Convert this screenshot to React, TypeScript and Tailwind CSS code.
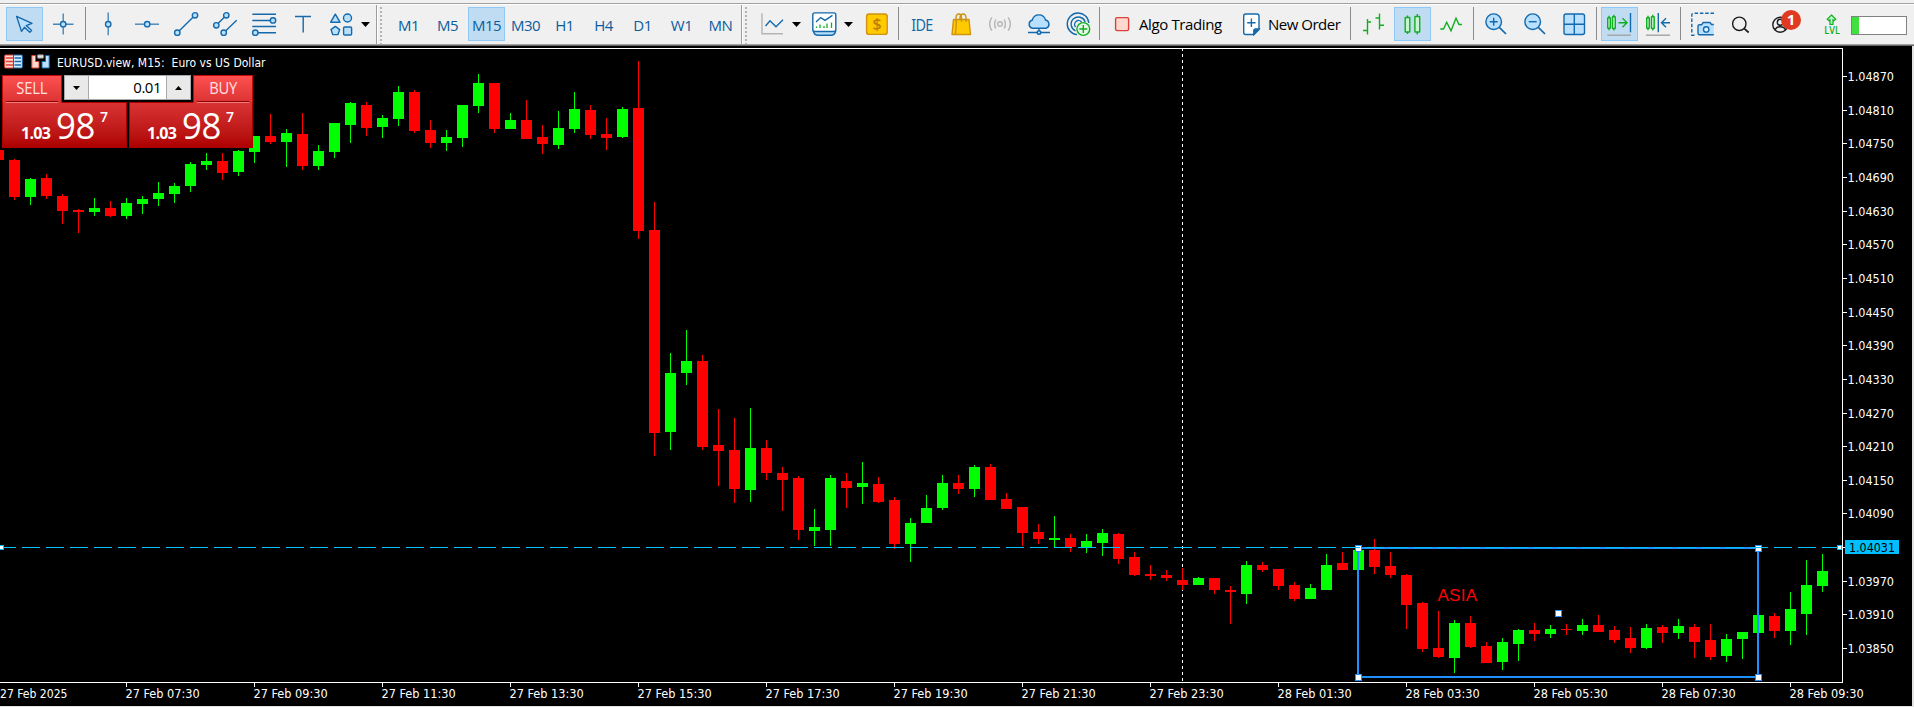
import type { ReactNode } from "react";

/* [wickTop, wickBottom, bodyTop, bodyBottom, rising] */
type Candle = [number, number, number, number, 0 | 1];

const FIRST_X = -2;
const STEP = 16;

const CANDLES: Candle[] = [
  [150, 160, 150, 160, 0],
  [159, 200, 160, 197, 0],
  [178, 205, 179, 197, 1],
  [174, 199, 178, 196, 0],
  [194, 224, 196, 211, 0],
  [209, 233, 210, 212, 0],
  [198, 216, 208, 212, 1],
  [201, 217, 208, 216, 0],
  [198, 219, 203, 216, 1],
  [196, 214, 199, 204, 1],
  [182, 206, 193, 199, 1],
  [183, 203, 186, 194, 1],
  [162, 192, 164, 186, 1],
  [153, 170, 161, 165, 1],
  [153, 180, 161, 173, 0],
  [150, 176, 151, 172, 1],
  [136, 163, 136, 152, 1],
  [114, 144, 136, 142, 0],
  [129, 167, 133, 142, 1],
  [113, 170, 134, 166, 0],
  [145, 170, 151, 166, 1],
  [123, 158, 123, 152, 1],
  [102, 143, 103, 125, 1],
  [102, 136, 105, 128, 0],
  [115, 138, 118, 127, 1],
  [86, 126, 92, 119, 1],
  [90, 133, 92, 131, 0],
  [120, 148, 130, 143, 0],
  [130, 151, 137, 143, 1],
  [105, 147, 105, 138, 1],
  [74, 113, 83, 106, 1],
  [83, 133, 83, 129, 0],
  [113, 129, 120, 129, 1],
  [100, 139, 120, 139, 0],
  [125, 154, 137, 144, 0],
  [111, 149, 128, 145, 1],
  [92, 133, 109, 129, 1],
  [105, 139, 110, 135, 0],
  [118, 150, 134, 138, 0],
  [107, 138, 109, 137, 1],
  [61, 239, 108, 231, 0],
  [202, 456, 230, 433, 0],
  [353, 450, 373, 432, 1],
  [330, 385, 361, 373, 1],
  [355, 450, 361, 447, 0],
  [409, 486, 445, 451, 0],
  [418, 503, 450, 489, 0],
  [408, 502, 448, 490, 1],
  [440, 480, 448, 473, 0],
  [467, 511, 473, 480, 0],
  [476, 540, 478, 530, 0],
  [509, 546, 527, 531, 1],
  [475, 546, 478, 530, 1],
  [473, 508, 481, 488, 0],
  [462, 504, 483, 487, 1],
  [477, 503, 484, 502, 0],
  [497, 549, 500, 544, 0],
  [518, 562, 523, 544, 1],
  [495, 523, 508, 523, 1],
  [475, 510, 483, 508, 1],
  [475, 494, 483, 489, 0],
  [465, 497, 467, 489, 1],
  [464, 500, 467, 500, 0],
  [493, 509, 499, 509, 0],
  [507, 546, 507, 533, 0],
  [524, 544, 532, 539, 0],
  [516, 547, 538, 540, 1],
  [534, 552, 538, 547, 0],
  [534, 553, 541, 547, 1],
  [529, 556, 533, 543, 1],
  [533, 564, 534, 559, 0],
  [552, 576, 557, 575, 0],
  [565, 580, 574, 576, 0],
  [570, 581, 575, 578, 0],
  [568, 590, 580, 585, 0],
  [577, 585, 578, 585, 1],
  [578, 594, 578, 590, 0],
  [586, 624, 590, 592, 0],
  [561, 604, 565, 594, 1],
  [562, 572, 565, 570, 0],
  [569, 590, 569, 586, 0],
  [582, 601, 585, 599, 0],
  [584, 599, 588, 599, 1],
  [554, 590, 565, 590, 1],
  [552, 570, 563, 570, 0],
  [550, 570, 550, 570, 1],
  [539, 574, 550, 567, 0],
  [552, 578, 566, 575, 0],
  [574, 629, 575, 605, 0],
  [602, 652, 603, 649, 0],
  [611, 658, 648, 657, 0],
  [620, 673, 623, 658, 1],
  [616, 648, 623, 647, 0],
  [642, 663, 646, 663, 0],
  [638, 670, 642, 662, 1],
  [629, 661, 630, 644, 1],
  [623, 641, 630, 634, 0],
  [625, 638, 629, 634, 1],
  [624, 635, 629, 630, 0],
  [619, 635, 625, 631, 1],
  [615, 632, 625, 632, 0],
  [626, 643, 630, 640, 0],
  [627, 653, 638, 648, 0],
  [624, 649, 628, 648, 1],
  [625, 643, 627, 633, 0],
  [619, 639, 626, 633, 1],
  [624, 658, 627, 642, 0],
  [624, 660, 640, 657, 0],
  [634, 662, 639, 656, 1],
  [632, 659, 632, 639, 1],
  [615, 633, 615, 633, 1],
  [613, 638, 616, 631, 0],
  [592, 645, 609, 631, 1],
  [560, 635, 585, 614, 1],
  [554, 592, 571, 586, 1],
];

const PRICES = [
  "1.04870", "1.04810", "1.04750", "1.04690", "1.04630", "1.04570", "1.04510", "1.04450", "1.04390",
  "1.04330", "1.04270", "1.04210", "1.04150", "1.04090", "", "1.03970", "1.03910", "1.03850",
];

const TIMES = [
  "27 Feb 2025", "27 Feb 07:30", "27 Feb 09:30", "27 Feb 11:30", "27 Feb 13:30", "27 Feb 15:30", "27 Feb 17:30",
  "27 Feb 19:30", "27 Feb 21:30", "27 Feb 23:30", "28 Feb 01:30", "28 Feb 03:30", "28 Feb 05:30", "28 Feb 07:30",
  "28 Feb 09:30",
];

const TAHOMA = "font-['DejaVu_Sans_Condensed','DejaVu_Sans',sans-serif]";
const SEGOE = "font-['Open_Sans',sans-serif]";

const BLUE = "#1469ac";
const SKY = "#b9e1ff";
const GREEN = "#0fae22";

function Icon({ children, active = false, wide = "w-[39px]", vb = 39 }: { children: ReactNode; active?: boolean; wide?: string; vb?: number }) {
  return (
    <div className={`${active ? "w-[37px] bg-[#c0dcf3] outline outline-1 -outline-offset-1 outline-[#90c8f6]" : wide} h-[34px] shrink-0`}>
      <svg className="block h-full w-full overflow-visible" viewBox={`0 0 ${active ? 37 : vb} 34`} fill="none" stroke={BLUE} strokeWidth="1.4">
        {children}
      </svg>
    </div>
  );
}

function Caret() {
  return (
    <svg className="h-[34px] w-[13px] shrink-0" viewBox="0 0 13 34">
      <path d="M0 15H9L4.5 20Z" fill="#000" />
    </svg>
  );
}

function Separator() {
  return (
    <div className="h-[33px] w-[6px] shrink-0 pl-[2px]">
      <div className="h-full w-px bg-[#8c8c8c]" />
    </div>
  );
}

function Grip() {
  return (
    <div className="flex w-[12px] shrink-0 gap-[3px] self-stretch">
      <div className="w-px bg-[#9c9c9c] shadow-[1px_0_0_#fff]" />
      <div className="mt-[2px] w-[2px] bg-[repeating-linear-gradient(to_bottom,#b4b4b4_0,#b4b4b4_2px,transparent_2px,transparent_4px)]" />
    </div>
  );
}

function Period({ label, active = false }: { label: string; active?: boolean }) {
  return (
    <div
      className={`${active ? "mx-px w-[37px] bg-[#c0dcf3] outline outline-1 -outline-offset-1 outline-[#90c8f6]" : "w-[39px]"} flex h-[34px] shrink-0 items-center justify-center pt-[2px] text-[15px] tracking-[-0.5px] text-[#0b5c9e]`}
    >
      {label}
    </div>
  );
}

function Node({ x, y }: { x: number; y: number }) {
  return <circle cx={x} cy={y} r="2.7" fill={SKY} />;
}

function MiniCandle({ x, y, w, h, o = 2 }: { x: number; y: number; w: number; h: number; o?: number }) {
  return (
    <g stroke={GREEN} fill="#c8f5cf" strokeWidth="1.4">
      <path d={`M${x + w / 2} ${y - o}V${y + h + o}`} />
      <rect x={x} y={y} width={w} height={h} rx="0.5" />
    </g>
  );
}

function Toolbar() {
  return (
    <div className={`flex h-[46px] shrink-0 flex-col bg-[#f0f0f0] ${SEGOE}`}>
      <div className="mt-[3px] h-px shrink-0 bg-[#a0a0a0]" />
      <div className="h-px shrink-0 bg-white" />
      <div className="flex h-[39px] shrink-0 items-start overflow-hidden">
        <div className="mt-[2px] flex pl-[6px]">
          <Icon active>
            <path d="M10.6 9.4 26 16.3 20.2 18.6 25.6 23.6 23.8 25.3 18.4 20.3 15.5 24.4Z" fill={SKY} strokeLinejoin="round" />
          </Icon>
          <div className="w-px" />
          <Icon>
            <path d="M9 17.2H29.5M19.2 6.5V27.5" stroke="#4585b8" />
            <Node x={19.2} y={17.2} />
          </Icon>
          <Separator />
          <Icon>
            <path d="M19.2 5.5V28.3" stroke="#4585b8" />
            <Node x={19.2} y={17.2} />
          </Icon>
          <Icon>
            <path d="M7 17.2H31" stroke="#4585b8" />
            <Node x={19.2} y={17.2} />
          </Icon>
          <Icon>
            <path d="M10.3 25.7 28 8.3" />
            <Node x={10.3} y={25.7} />
            <Node x={28} y={8.3} />
          </Icon>
          <Icon>
            <path d="M10.3 18.3 20.3 8.3M17.7 25.7 30.7 13.3" />
            <Node x={10.3} y={18.3} />
            <Node x={20.3} y={8.3} />
            <Node x={17.7} y={25.7} />
          </Icon>
          <Icon>
            <path d="M7.3 7.3H31M7.3 13.5H28M7.3 19.5H31M10.3 25.7H31" />
            <Node x={28} y={13.4} />
            <Node x={10.3} y={25.7} />
          </Icon>
          <Icon>
            <path d="M11 9.5H27M19.2 9.5V25.5" />
          </Icon>
          <Icon>
            <g fill={SKY} strokeLinejoin="round">
              <path d="M12.3 7.2 17 15.2H7.7Z" />
              <circle cx="24.5" cy="11" r="4" />
              <path d="M12.3 19.4 16.7 22.6 15 27.6H9.7L8 22.6Z" />
              <rect x="20.6" y="20" width="8" height="8" rx="1" />
            </g>
          </Icon>
          <div className="-ml-px">
            <Caret />
          </div>
          <div className="w-[2px]" />
        </div>
        <Grip />
        <div className="mt-[2px] flex pl-px">
          <Period label="M1" />
          <Period label="M5" />
          <Period label="M15" active />
          <Period label="M30" />
          <Period label="H1" />
          <Period label="H4" />
          <Period label="D1" />
          <Period label="W1" />
          <Period label="MN" />
          <div className="w-px" />
        </div>
        <Grip />
        <div className="mt-[2px] flex">
          <Icon>
            <path d="M9 6.3V26.8H30" stroke="#b4b4b4" />
            <path d="M12.5 19 17 13.7 23 19.7 30 12.8" />
          </Icon>
          <Caret />
          <Icon>
            <path d="M8.5 24.5Q9.5 28.3 13 28.3H26Q29.5 28.3 30.5 24.5Z" fill={SKY} />
            <rect x="7.8" y="5.9" width="23" height="18.5" rx="2" fill="#fff" />
            <path d="M11 15 15.7 10.6 20 13.4 27.5 8.4" />
            <path d="M11.5 21V19.5M15 21V17.5M19 21V19M22 21V16.5M26.5 21V15.5" stroke={GREEN} strokeWidth="1.3" />
          </Icon>
          <Caret />
          <Icon>
            <rect x="9.6" y="7" width="20.6" height="20.4" rx="2.5" fill="#ffcb00" stroke="#cf9310" />
            <text x="20" y="23" fontSize="16" stroke="none" fill="#bb7f0a" textAnchor="middle" className="font-['Open_Sans',sans-serif] font-semibold">$</text>
          </Icon>
          <Separator />
          <div className="flex h-[34px] w-[39px] items-center justify-center pt-[1px] text-[16px] text-[#1469ac]">
            <span className="-mx-4 scale-x-90 font-['Noto_Sans',sans-serif] tracking-[-0.7px]">IDE</span>
          </div>
          <Icon>
            <path d="M12.5 12.5H28L29.5 27.5H11Z" fill="#ffcb00" stroke="#cf9310" strokeLinejoin="round" />
            <path d="M15 15V11Q15 7 17.8 7T20.5 11V15M19 12V10Q19.5 7 22.2 7T25 11V15M15.5 12.5 14.5 27" stroke="#cf9310" />
          </Icon>
          <Icon>
            <g stroke="#b8b8b8" strokeWidth="1.5">
              <circle cx="20" cy="17" r="2.3" />
              <path d="M15.8 12.5Q13.5 17 15.8 21.5M24.2 12.5Q26.5 17 24.2 21.5M11.8 10.3Q7.5 17 11.8 23.7M28.2 10.3Q32.5 17 28.2 23.7" />
            </g>
          </Icon>
          <Icon>
            <path d="M13 21.2A4.3 4.3 0 0 1 13.3 13 6.8 6.8 0 0 1 26.5 13 4.3 4.3 0 0 1 27.3 21.2Z" fill={SKY} />
            <path d="M20 21.5V25M9 25.5H31" />
            <circle cx="20" cy="25.5" r="1.8" fill={SKY} />
          </Icon>
          <Icon>
            <path d="M19 27.6A10.8 10.8 0 1 1 30.8 16M17.5 23.8A7.2 7.2 0 1 1 27.2 15M17.5 20A3.8 3.8 0 1 1 23.6 15" />
            <circle cx="25.3" cy="22" r="6.4" fill="#e3f9e6" stroke={GREEN} />
            <path d="M25.3 18V26M21.3 22H29.3" stroke={GREEN} />
          </Icon>
          <Separator />
          <Icon wide="w-[32px]" vb={32}>
            <rect x="12.6" y="10.6" width="13" height="13" rx="1.5" fill="#ffd8ce" stroke="#dd4038" />
          </Icon>
          <div className="flex h-[34px] w-[98px] items-center pt-[1px] pl-[4px] text-[15px] tracking-[-0.38px] whitespace-nowrap text-black">Algo Trading</div>
          <Icon wide="w-[31px]" vb={31}>
            <path d="M10.7 9Q10.7 7 12.7 7H24Q26 7 26 9V22.5L21 27.5H12.7Q10.7 27.5 10.7 25.5Z" fill="#fff" />
            <path d="M26 22H22.5Q20.8 22 20.8 24V27.5Z" fill={BLUE} />
            <path d="M18.4 11.5V20M14.2 15.7H22.6" />
          </Icon>
          <div className="flex h-[34px] w-[84px] items-center pt-[1px] pl-[4px] text-[15px] tracking-[-0.5px] whitespace-nowrap text-black">New Order</div>
          <Separator />
          <Icon>
            <path d="M13.5 12V27.5M9 23.5H13.5M13.5 15H17M25.5 6.5V22.5M21.5 11H25.5M25.5 18.3H30" stroke={GREEN} />
          </Icon>
          <div className="w-px" />
          <Icon active>
            <MiniCandle x={11.2} y={10.5} w={4.6} h={14.5} />
            <MiniCandle x={20.9} y={9.5} w={4.8} h={15.5} o={2.6} />
          </Icon>
          <div className="w-px" />
          <Icon>
            <path d="M8.3 22H11.5L14.7 15.3 19 23.7 24 11.3 27 17.5H30" stroke={GREEN} />
          </Icon>
          <Separator />
          <Icon>
            <path d="M22.3 20.3 29 27" strokeWidth="1.7" />
            <circle cx="16.7" cy="14.7" r="7.8" fill={SKY} />
            <path d="M12.7 14.7H20.7M16.7 10.7V18.7" />
          </Icon>
          <Icon>
            <path d="M22.3 20.3 29 27" strokeWidth="1.7" />
            <circle cx="16.7" cy="14.7" r="7.8" fill={SKY} />
            <path d="M12.7 14.7H20.7" />
          </Icon>
          <Icon>
            <rect x="9" y="7" width="20.5" height="20.5" rx="2" fill={SKY} />
            <path d="M19.3 7V27.5M9 17.3H29.5" />
          </Icon>
          <Separator />
          <div className="w-px" />
          <Icon active>
            <MiniCandle x={6.7} y={10.7} w={2.6} h={10.6} />
            <MiniCandle x={11.5} y={9.7} w={2.8} h={11.8} />
            <path d="M17.5 15.7H25.8M21.5 11.2 26 15.7 21.5 20.2" stroke={GREEN} />
            <path d="M29.5 6V25.3" />
            <path d="M6.3 28.2H30" stroke="#a3a3a3" />
          </Icon>
          <div className="w-px" />
          <Icon>
            <MiniCandle x={7.7} y={10.7} w={2.6} h={10.6} />
            <MiniCandle x={12.4} y={9.7} w={2.8} h={11.8} />
            <path d="M31 15.7H23M27 11.2 22.5 15.7 27 20.2M19.3 6V25.3" />
            <path d="M7 28.2H31" stroke="#a3a3a3" />
          </Icon>
          <Separator />
          <Icon>
            <path d="M30 6.2H9.5Q7.8 6.2 7.8 8V28.2H12" strokeDasharray="3.5 1.8" />
            <path d="M29.8 17.5H27.5L26 15.5H19.2L17.5 17.8H15.5Q14 17.8 14 19.5V26Q14 27.8 15.5 27.8H29.8" fill={SKY} />
            <circle cx="22.2" cy="22.4" r="2.7" fill="#e4f4ff" />
          </Icon>
          <Icon>
            <circle cx="16.3" cy="16.8" r="6.7" stroke="#1c1c1c" />
            <path d="M21 21.3 25.7 25.5" stroke="#1c1c1c" strokeWidth="1.7" />
          </Icon>
          <Icon>
            <g stroke="#1c1c1c">
              <circle cx="18.3" cy="17.7" r="7.5" />
              <circle cx="18.3" cy="15.3" r="3" />
              <path d="M13.2 23Q14 19.8 18.3 19.8T23.4 23" />
            </g>
            <circle cx="29" cy="13" r="10" fill="#e03a20" stroke="none" />
            <text x="29" y="18.3" fontSize="15" fill="#fff" stroke="none" textAnchor="middle" className="font-['Open_Sans',sans-serif] font-bold">1</text>
          </Icon>
          <div className="w-[11px]" />
          <Icon>
            <path d="M19.5 8 23.8 12.2 22 13.7 21 12.8V17.3H18V12.8L17 13.7 15.2 12.2Z" stroke={GREEN} fill="#c8f5cf" strokeWidth="1.2" />
            <text x="12.3" y="27" fontSize="10" textLength="15.6" lengthAdjust="spacingAndGlyphs" fill={GREEN} stroke="none" className="font-['Open_Sans',sans-serif] font-semibold">LVL</text>
          </Icon>
          <div className="mt-[9px] h-[19px] w-[56px] border border-[#828282] bg-white">
            <div className="h-full w-[7px] bg-[#3fe03f]" />
          </div>
        </div>
      </div>
      <div className="h-px shrink-0 bg-[#a0a0a0]" />
      <div className="h-px shrink-0 bg-[#696969]" />
    </div>
  );
}

function Handle({ x, y, size = 7, color = "#1e90ff" }: { x: number; y: number; size?: number; color?: string }) {
  return (
    <g>
      <rect x={x} y={y} width={size} height={size} fill={color} />
      <rect x={x + 1} y={y + 1} width={size - 2} height={size - 2} fill="#fff" />
    </g>
  );
}

function Chart() {
  return (
    <svg className={`block h-[660px] w-[1912px] ${TAHOMA}`} viewBox="0 46 1912 660" shapeRendering="crispEdges">
      <path d="M1182.5 48V682" stroke="#fff" strokeDasharray="3 3" />
      {CANDLES.map(([wt, wb, bt, bb, up], i) => {
        const x = FIRST_X + i * STEP;
        return (
          <g key={i} fill={up ? "#00ff00" : "#ff0000"}>
            <rect x={x} y={wt} width="1" height={wb - wt} />
            <rect x={x - 5} y={bt} width="11" height={bb - bt} />
          </g>
        );
      })}
      <rect x="1358" y="548" width="400" height="129" fill="none" stroke="#1e90ff" strokeWidth="2" />
      <Handle x={1355} y={545} />
      <Handle x={1755} y={545} />
      <Handle x={1355} y={674} />
      <Handle x={1755} y={674} />
      <Handle x={1555} y={610} />
      <path d="M-2 547.5H1842" stroke="#00bfff" strokeDasharray="18 6" />
      <Handle x={-1} y={545} size={5} color="#00bfff" />
      <text x="1437.5" y="601" fontSize="17" textLength="39.5" fill="#f00" className="font-['Liberation_Sans',Arial,sans-serif]">ASIA</text>
      <path d="M0 48.5H1842.5V682.5H0" fill="none" stroke="#fff" />
      <Handle x={1837} y={545} size={5} color="#00bfff" />
      <g fill="#fff" fontSize="12">
        {PRICES.map((p, i) => {
          const y = Math.round(76 + i * 33.65);
          return p ? (
            <g key={p}>
              <rect x="1843" y={y} width="4" height="1" />
              <text x="1847.5" y={y + 5} textLength="46.5" lengthAdjust="spacingAndGlyphs">{p}</text>
            </g>
          ) : null;
        })}
        {TIMES.map((t, i) => {
          const x = -2 + i * 128;
          return (
            <g key={t}>
              <rect x={x} y="683" width="1" height="4" />
              <text x={Math.max(0, x - 0.5)} y="698" textLength={i === 0 ? 67.5 : 74.3} lengthAdjust="spacingAndGlyphs">{t}</text>
            </g>
          );
        })}
      </g>
      <rect x="1843" y="547" width="2" height="1" fill="#fff" />
      <rect x="1845" y="540" width="54" height="14" fill="#00bfff" />
      <text x="1849" y="552" fontSize="12" textLength="46" lengthAdjust="spacingAndGlyphs" fill="#000">1.04031</text>
    </svg>
  );
}

function PriceTile({ left = false }: { left?: boolean }) {
  return (
    <div
      className={`${left ? "w-[125px]" : "w-[124px]"} flex h-[46px] shrink-0 items-start border border-[#ac0000] bg-linear-to-b from-[#d93232] to-[#ae0000] text-white`}
    >
      <span className={`${left ? "ml-[18px]" : "ml-[17px]"} mt-[20px] w-[35px] shrink-0 text-[16px] leading-[20px] font-bold tracking-[-0.7px]`}>1.03</span>
      <span className="-mt-[3px] w-[44px] shrink-0 origin-left scale-x-[0.94] text-[37px] leading-[50px] tracking-[-0.5px]">98</span>
      <span className="mt-[5px] shrink-0 text-[14px] leading-[18px] font-semibold">7</span>
    </div>
  );
}

function SideTab({ label }: { label: string }) {
  return (
    <div className="relative -mb-px flex h-[28px] w-[60px] shrink-0 flex-col items-center border border-b-0 border-[#c80808] bg-linear-to-b from-[#ff5050] to-[#d93232] text-[#ffe0e0]">
      <span className="h-[25px] scale-x-[0.92] text-[16px] leading-[25px] tracking-[-0.2px]">{label}</span>
      <div className="h-px w-[52px] shrink-0 bg-[#8e0000]" />
      <div className="h-px w-[52px] shrink-0 bg-[#f08080]" />
    </div>
  );
}

function TradePanel() {
  return (
    <div className={`absolute top-[75px] left-[2px] w-[251px] bg-black ${SEGOE}`}>
      <div className="flex justify-between">
        <SideTab label="SELL" />
        <div className="flex h-[25px] w-[127px] border border-[#a9a9b0] bg-white">
          <div className="flex w-[24px] items-center justify-center border-r border-[#a9a9b0] bg-[#e9e9e9]">
            <svg className="h-[4px] w-[7px]" viewBox="0 0 7 4"><path d="M0 0H7L3.5 4Z" /></svg>
          </div>
          <div className="flex flex-1 items-center justify-end pr-[5px] text-[15px] tracking-[-0.5px] text-black">0.01</div>
          <div className="flex w-[24px] items-center justify-center border-l border-[#a9a9b0] bg-[#e9e9e9]">
            <svg className="h-[4px] w-[7px]" viewBox="0 0 7 4"><path d="M0 4H7L3.5 0Z" /></svg>
          </div>
        </div>
        <SideTab label="BUY" />
      </div>
      <div className="flex justify-between">
        <PriceTile left />
        <PriceTile />
      </div>
    </div>
  );
}

function ChartTitle() {
  return (
    <div className={`absolute top-[54px] left-[4px] flex items-start text-white ${TAHOMA}`}>
      <svg className="h-[15px] w-[19px]" viewBox="0 0 19 15">
        <path d="M9.5 1H1.5Q.7 1 .7 1.8V13.2Q.7 14 1.5 14H9.5Z" fill="#ffd8ce" stroke="#dd4038" />
        <path d="M9.5 1H17.5Q18.3 1 18.3 1.8V13.2Q18.3 14 17.5 14H9.5Z" fill="#d8eeff" stroke="#1469ac" />
        <path d="M2 4H9M2 7.5H9M2 11H9" stroke="#dd4038" strokeWidth="1.5" />
        <path d="M10.5 4H17M10.5 7.5H17M10.5 11H17" stroke="#1469ac" strokeWidth="1.5" />
      </svg>
      <svg className="ml-[8px] h-[15px] w-[19px]" viewBox="0 0 19 15">
        <path d="M.8 1.5H4.5V7.5H8V14H.8Z" fill="#ffd8ce" stroke="#dd4038" />
        <path d="M18.2 1.5H14.5V7.5H11V14H18.2Z" fill="#b9e1ff" stroke="#1469ac" />
        <rect x="6.3" y=".8" width="6.4" height="3.4" rx="1" fill="#e4e4e4" stroke="#777" />
      </svg>
      <span className="mt-px ml-[7px] text-[12px] leading-[16px] tracking-[0.03px] whitespace-pre">EURUSD.view, M15:  Euro vs US Dollar</span>
    </div>
  );
}

export default function App() {
  return (
    <div className="relative flex h-[707px] w-[1914px] flex-col overflow-hidden bg-[#e3e3e3]">
      <Toolbar />
      <div className="h-[660px] w-[1912px] bg-black">
        <Chart />
      </div>
      <ChartTitle />
      <TradePanel />
    </div>
  );
}
